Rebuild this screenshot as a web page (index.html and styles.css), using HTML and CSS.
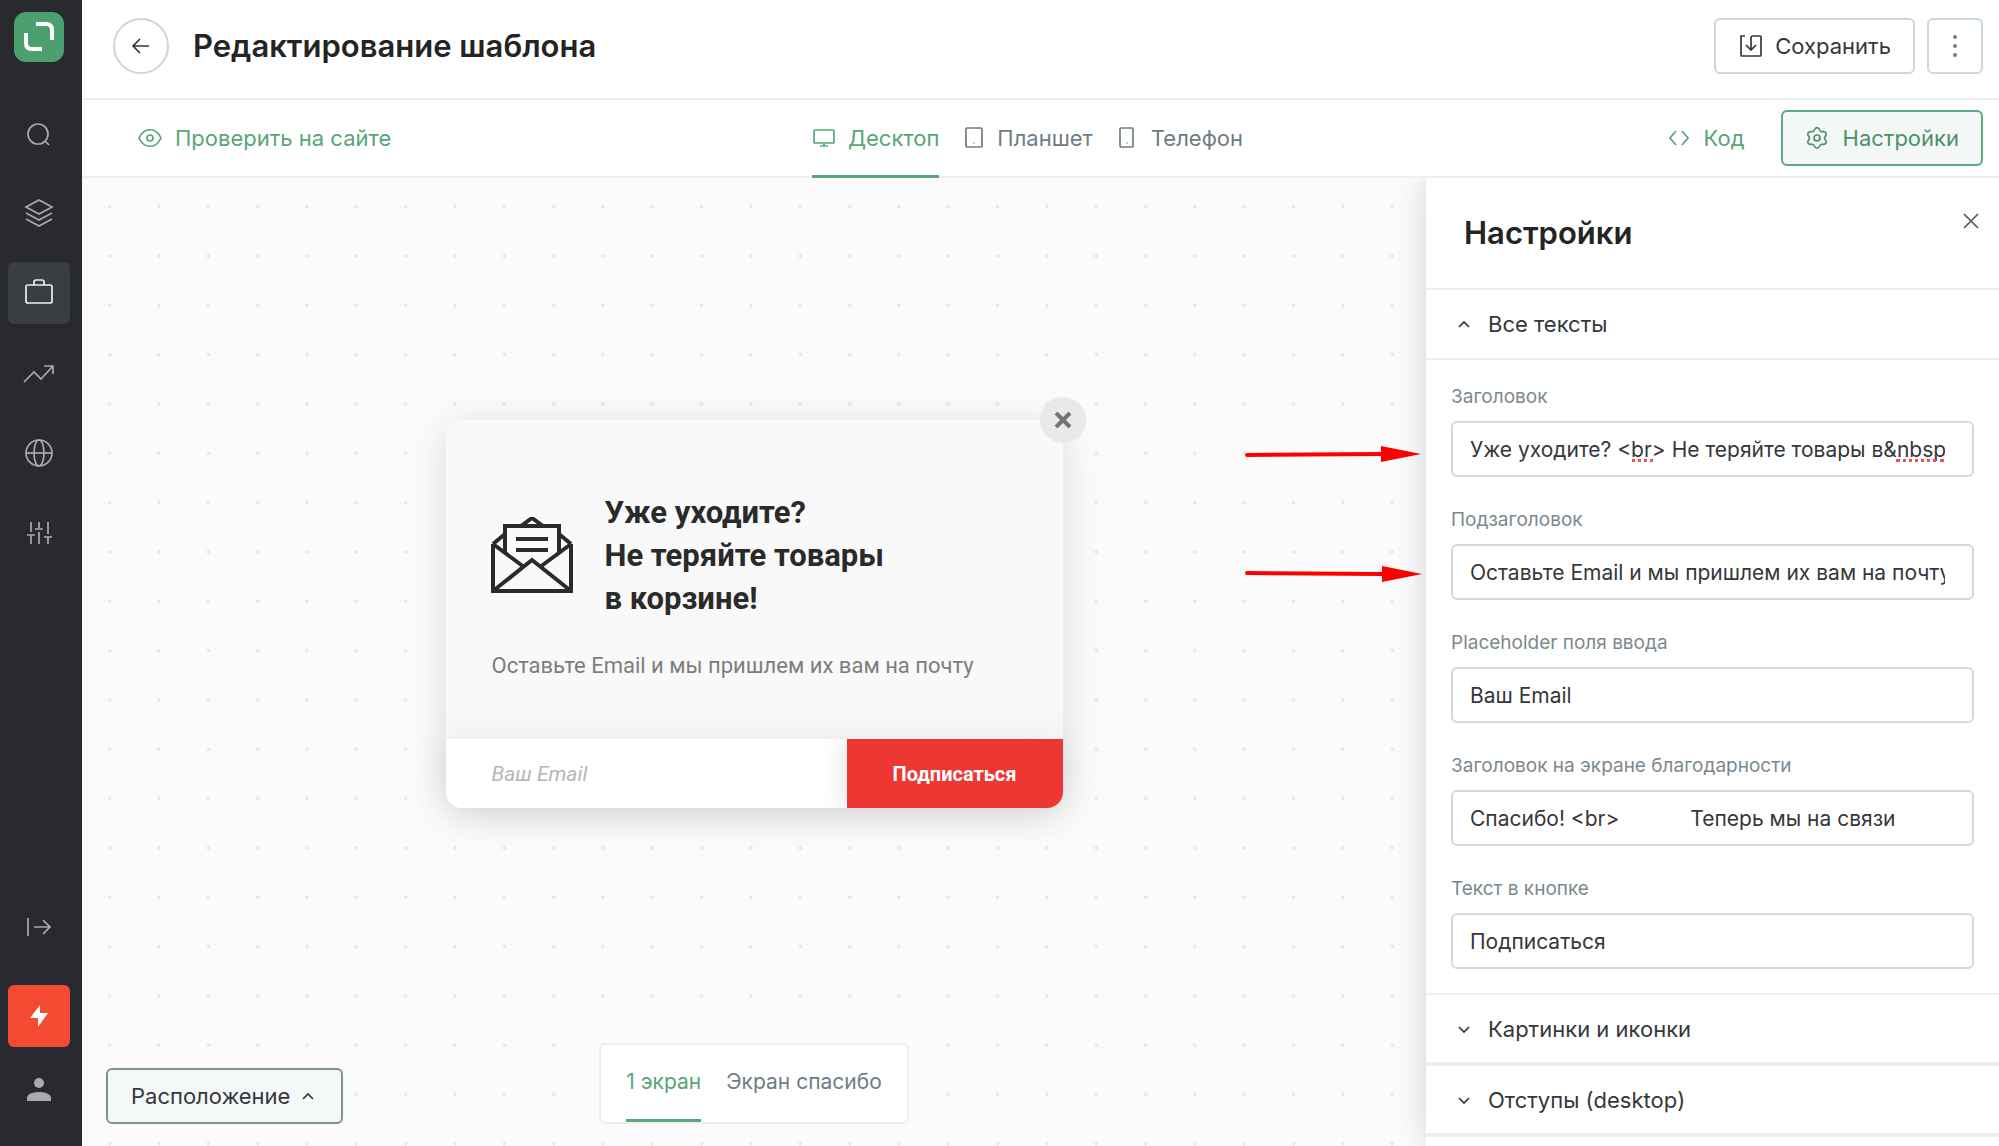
FILE: index.html
```html
<!DOCTYPE html>
<html lang="ru">
<head>
<meta charset="utf-8">
<title>Редактирование шаблона</title>
<meta name="viewport" content="width=device-width, initial-scale=1">
<link rel="stylesheet" href="styles.css">
</head>
<body>
<div class="app">
  <nav class="rail" aria-label="Главное меню">
    <a class="logo" href="#" aria-label="Главная">
      <svg width="50" height="50" viewBox="0 0 50 50"><path d="M22 12h10q6 0 6 6v10M12 21v10q0 6 6 6h10"/></svg>
    </a>
    <a class="rail-link" href="#" aria-label="Поиск"><svg width="32" height="32" viewBox="0 0 32 32"><circle cx="15" cy="17" r="10"/><path d="M22 24l4 4"/></svg></a>
    <a class="rail-link" href="#" aria-label="Слои"><svg width="32" height="32" viewBox="0 0 32 32"><path d="M16 3l13 7-13 7-13-7zM3 16l13 7 13-7M3 22l13 7 13-7"/></svg></a>
    <a class="rail-link is-active" href="#" aria-label="Проекты"><svg width="32" height="32" viewBox="0 0 32 32"><rect x="3" y="8" width="26" height="18" rx="2"/><path d="M11 8V5q0-2 2-2h6q2 0 2 2v3"/></svg></a>
    <a class="rail-link" href="#" aria-label="Статистика"><svg width="32" height="32" viewBox="0 0 32 32"><path d="M1 25l10-10 7 7L30 9M21 9h9v8"/></svg></a>
    <a class="rail-link" href="#" aria-label="Сайты"><svg width="32" height="32" viewBox="0 0 32 32"><circle cx="16" cy="16" r="13"/><ellipse cx="16" cy="16" rx="5" ry="13"/><path d="M3 16h26"/></svg></a>
    <a class="rail-link" href="#" aria-label="Параметры"><svg width="32" height="32" viewBox="0 0 32 32"><path d="M8 5v10M8 18v9M4 18h8M16 5v6M16 15v12M12 12h8M25 5v12M25 20v7M21 20h8"/></svg></a>
    <div class="rail-bottom">
      <a class="rail-link is-exit" href="#" aria-label="Развернуть меню"><svg width="32" height="32" viewBox="0 0 32 32"><path d="M5 7v18M11 16h16M20 9l7 7-7 7"/></svg></a>
      <a class="rail-link is-boost" href="#" aria-label="Тариф"><svg width="32" height="32" viewBox="0 0 32 32"><path d="M17 5L7 18h8l0 9L25 13h-8z"/></svg></a>
      <a class="rail-link is-user" href="#" aria-label="Профиль"><svg width="32" height="32" viewBox="0 0 32 32"><circle cx="16" cy="9" r="5"/><path d="M4 27v-3c0-4 6-6 12-6s12 2 12 6v3z"/></svg></a>
    </div>
  </nav>

  <div class="main">
    <header class="header">
      <button class="back" type="button" aria-label="Назад"><svg width="20" height="20" viewBox="0 0 20 20"><path d="M18 10H2M9 3l-7 7 7 7"/></svg></button>
      <h1 class="title">Редактирование шаблона</h1>
      <button class="btn btn-save" type="button"><svg width="22" height="24" viewBox="0 0 22 24"><path d="M5 2H1v19q0 1 1 1h18q1 0 1-1V3q0-1-1-1h-7q-2 0-2 2v12M6 11l5 5 5-5"/></svg>Сохранить</button>
      <button class="btn btn-more" type="button" aria-label="Ещё"><svg width="24" height="24" viewBox="0 0 24 24"><circle cx="12" cy="3" r="2"/><circle cx="12" cy="12" r="2"/><circle cx="12" cy="21" r="2"/></svg></button>
    </header>

    <div class="toolbar">
      <a class="tool" href="#"><svg width="24" height="24" viewBox="0 0 24 24"><path d="M1 12c5-11 17-11 22 0-5 11-17 11-22 0z"/><circle cx="12" cy="12" r="3"/></svg>Проверить на сайте</a>
      <div class="devices" role="tablist">
        <button class="device is-active" type="button" role="tab" aria-selected="true"><svg width="24" height="24" viewBox="0 0 24 24"><rect x="2" y="4" width="20" height="13" rx="1"/><path d="M12 17v3M8 20h8"/></svg>Десктоп</button>
        <button class="device is-tablet" type="button" role="tab" aria-selected="false"><svg width="18" height="24" viewBox="0 0 18 24"><rect x="1" y="2" width="16" height="19" rx="1"/><path class="dot" d="M8 17h2"/></svg>Планшет</button>
        <button class="device is-phone" type="button" role="tab" aria-selected="false"><svg width="16" height="24" viewBox="0 0 16 24"><rect x="1" y="2" width="13" height="19" rx="1"/><path class="dot" d="M7 17h2"/></svg>Телефон</button>
      </div>
      <div class="tools">
        <a class="tool is-code" href="#"><svg width="20" height="24" viewBox="0 0 20 24"><path d="M7 5l-6 7 6 7M13 5l6 7-6 7"/></svg>Код</a>
        <button class="btn btn-settings" type="button"><svg width="22" height="24" viewBox="1 0 22 24"><g id="tooth"><path d="M8.250 5.500C9.500 4.800 9.400 1.700 12 1.700C14.600 1.700 14.500 4.800 15.750 5.500"/></g><use href="#tooth" transform="rotate(60 12 12)"/><use href="#tooth" transform="rotate(120 12 12)"/><use href="#tooth" transform="rotate(180 12 12)"/><use href="#tooth" transform="rotate(240 12 12)"/><use href="#tooth" transform="rotate(300 12 12)"/><circle cx="12" cy="12" r="3"/></svg>Настройки</button>
      </div>
    </div>

    <div class="workspace">
      <main class="canvas">
        <div class="stage">
          <section class="popup">
            <button class="popup-close" type="button" aria-label="Закрыть"><svg width="18" height="18" viewBox="0 0 18 18"><path d="M2 2l14 14M16 2L2 16"/></svg></button>
            <div class="popup-body">
              <div class="popup-head">
                <svg class="envelope" width="82" height="78" viewBox="0 0 82 78"><path d="M2 27v47h78V27M2 27L14 17M80 27L68 17M2 27l31 23M80 27L49 50M2 74l39-31 39 31M14 35V9h54v26M30 9l11-8 11 8M25 22h32M25 33h32"/></svg>
                <h2 class="popup-title">Уже уходите?<br>Не теряйте товары<br>в&nbsp;корзине!</h2>
              </div>
              <p class="popup-text">Оставьте Email и мы пришлем их вам на почту</p>
            </div>
            <form class="popup-form">
              <input class="popup-input" type="email" placeholder="Ваш Email" aria-label="Ваш Email">
              <button class="popup-submit" type="button">Подписаться</button>
            </form>
          </section>
        </div>
        <div class="canvas-bar">
          <button class="btn btn-place" type="button">Расположение<svg width="16" height="16" viewBox="0 0 16 16"><path d="M3 11l5-5 5 5"/></svg></button>
          <div class="screens" role="tablist">
            <button class="screen is-active" type="button" role="tab" aria-selected="true">1 экран</button>
            <button class="screen" type="button" role="tab" aria-selected="false">Экран спасибо</button>
          </div>
        </div>
        <svg class="arrow arrow-first" width="178" height="20" viewBox="0 0 178 20"><path class="shaft" d="M3 11L138 10"/><path d="M137 2v16l40-8z"/></svg>
        <svg class="arrow arrow-second" width="178" height="20" viewBox="0 0 178 20"><path class="shaft" d="M3 9L138 10"/><path d="M138 2v16l40-8z"/></svg>
      </main>

      <aside class="panel">
        <div class="panel-head">
          <h2 class="panel-title">Настройки</h2>
          <button class="panel-close" type="button" aria-label="Закрыть настройки"><svg width="16" height="16" viewBox="0 0 16 16"><path d="M1 1l14 14M15 1L1 15"/></svg></button>
        </div>
        <button class="section" type="button" aria-expanded="true"><svg width="16" height="16" viewBox="0 0 16 16"><path d="M3 11l5-5 5 5"/></svg>Все тексты</button>
        <div class="fields">
          <div class="field">
            <label for="f-title">Заголовок</label>
            <div class="control">
              <input id="f-title" type="text" value="Уже уходите? &lt;br&gt; Не теряйте товары в&amp;nbsp;корзине!">
              <span class="typo typo-br"></span><span class="typo typo-nbsp"></span>
            </div>
          </div>
          <div class="field">
            <label for="f-sub">Подзаголовок</label>
            <input id="f-sub" type="text" value="Оставьте Email и мы пришлем их вам на почту">
          </div>
          <div class="field">
            <label for="f-ph">Placeholder поля ввода</label>
            <input id="f-ph" type="text" value="Ваш Email">
          </div>
          <div class="field">
            <label for="f-thanks">Заголовок на экране благодарности</label>
            <input id="f-thanks" type="text" value="Спасибо! &lt;br&gt;            Теперь мы на связи">
          </div>
          <div class="field">
            <label for="f-btn">Текст в кнопке</label>
            <input id="f-btn" type="text" value="Подписаться">
          </div>
        </div>
        <button class="section is-closed" type="button" aria-expanded="false"><svg width="16" height="16" viewBox="0 0 16 16"><path d="M3 6l5 5 5-5"/></svg>Картинки и иконки</button>
        <button class="section is-closed" type="button" aria-expanded="false"><svg width="16" height="16" viewBox="0 0 16 16"><path d="M3 6l5 5 5-5"/></svg>Отступы (desktop)</button>
      </aside>
    </div>
  </div>
</div>
</body>
</html>
```
FILE: styles.css
```css
* { box-sizing: border-box; }

body {
  margin: 0;
  background: #fff;
  color: #35373b;
  font: 400 22px/32px Inter, "Noto Sans", sans-serif;
}

button, input { margin: 0; font: inherit; color: inherit; }
button { padding: 0; border: 0; background: none; cursor: pointer; }
a { color: inherit; text-decoration: none; }
h1, h2, p { margin: 0; }
svg { display: block; flex: none; fill: none; stroke: currentColor; stroke-width: 1.7; }

.app { display: flex; height: 100vh; overflow: hidden; }

/* Left rail */
.rail {
  flex: none;
  display: flex;
  flex-direction: column;
  align-items: center;
  gap: 18px;
  width: 82px;
  padding: 12px 5px 25px 0;
  background: #292a2e;
  color: #a9aaad;
}
.logo { margin-bottom: 22px; border-radius: 12px; background: #4c9f6e; color: #fff; }
.logo svg { stroke-width: 4; }
.rail-link {
  display: flex;
  align-items: center;
  justify-content: center;
  width: 62px;
  height: 62px;
  border-radius: 6px;
}
.rail-link.is-active { background: #3a3d42; color: #eee; }
.rail-bottom { display: flex; flex-direction: column; margin-top: auto; }
.is-exit { margin-bottom: 27px; }
.is-boost { background: #f44a32; color: #fff; }
.is-boost svg, .is-user svg { fill: currentColor; stroke: none; }
.is-user { margin-top: 12px; }

/* Header */
.main { flex: 1; display: flex; flex-direction: column; min-width: 0; }
.header {
  display: flex;
  align-items: flex-start;
  height: 100px;
  padding: 18px 16px 0 31px;
  border-bottom: 2px solid #eeefef;
}
.back {
  display: flex;
  align-items: center;
  justify-content: center;
  width: 56px;
  height: 56px;
  border: 2px solid #cbd7df;
  border-radius: 50%;
}
.title {
  flex: 1;
  margin-left: 24px;
  color: #242424;
  font-size: 31px;
  font-weight: 600;
  line-height: 56px;
}
.btn {
  display: flex;
  align-items: center;
  height: 56px;
  border: 2px solid #cbd7df;
  border-radius: 6px;
  background: #fff;
}
.btn-save { gap: 13px; padding: 0 22px 0 24px; }
.btn-more { justify-content: center; width: 56px; margin-left: 12px; color: #6f7d86; }
.btn-more svg { fill: currentColor; stroke: none; }

/* Toolbar */
.toolbar {
  display: grid;
  grid-template-columns: 1fr auto 1fr;
  align-items: center;
  height: 78px;
  border-bottom: 2px solid #eeefef;
  color: #58a578;
}
.tool { display: flex; align-items: center; gap: 13px; padding-left: 56px; }
.devices { display: flex; gap: 26px; align-self: stretch; margin-bottom: -2px; padding-right: 26px; color: #6f7d83; }
.device { display: flex; align-items: center; gap: 14px; border-bottom: 3px solid transparent; }
.device.is-active { gap: 12px; border-color: #58a578; color: #58a578; }
.device.is-phone { gap: 16px; }
.dot { opacity: .5; }
.tools { display: flex; align-items: center; justify-content: flex-end; gap: 36px; padding-right: 16px; }
.is-code { gap: 15px; padding-left: 0; }
.btn-settings { gap: 15px; padding: 0 22px 0 23px; border-color: #5cab7d; background: #f3f7f6; color: #4c9068; }

/* Canvas */
.workspace { flex: 1; display: flex; min-height: 0; }
.canvas {
  position: relative;
  flex: 1;
  display: flex;
  flex-direction: column;
  min-width: 0;
  background: #fbfbfb radial-gradient(circle, #e6eaeb 0 2px, transparent 2px) 3px 4px / calc(148px / 3) calc(148px / 3);
}
.stage { flex: 1; display: flex; align-items: center; justify-content: center; padding-top: 7px; }
.popup {
  position: relative;
  width: 617px;
  border-radius: 16px;
  background: #f9f9f9;
  box-shadow: 0 6px 40px rgba(0, 0, 0, .13);
  font-family: Roboto, sans-serif;
}
.popup-body { padding: 71px 46px 57px; }
.popup-head { display: flex; align-items: center; gap: 32px; }
.envelope { margin-left: -1px; stroke: #2a2a2a; stroke-width: 4; }
.popup-title { color: #2a2a2a; font-size: 31px; font-weight: 700; line-height: 43px; }
.popup-text { margin-top: 30px; color: #7d7d7d; }
.popup-form {
  display: flex;
  height: 69px;
  overflow: hidden;
  border-radius: 0 0 16px 16px;
  box-shadow: 0 0 40px rgba(0, 0, 0, .08);
}
.popup-input { flex: 1; min-width: 0; padding: 0 46px; border: 0; background: #fff; font-size: 21px; font-style: italic; }
.popup-input::placeholder { color: #b5b5b5; }
.popup-submit { width: 216px; background: #ee3733; box-shadow: 0 0 30px rgba(0, 0, 0, .14); color: #fff; font-size: 20px; font-weight: 700; }
.popup-close {
  position: absolute;
  top: -23px;
  right: -23px;
  display: flex;
  align-items: center;
  justify-content: center;
  width: 46px;
  height: 46px;
  border-radius: 50%;
  background: #e9e9e9;
  color: #737373;
}
.popup-close svg { stroke-width: 4; }

.canvas-bar {
  display: grid;
  grid-template-columns: 1fr auto 1fr;
  align-items: end;
  padding: 0 24px 22px;
}
.btn-place { justify-self: start; gap: 10px; padding: 0 25px 0 23px; border-color: #7f8e96; background: #f4f8f9; }
.screens {
  display: flex;
  gap: 25px;
  height: 81px;
  padding: 0 25px;
  border: 2px solid #efefef;
  border-radius: 6px;
  background: #fff;
  color: #6f7d83;
  font-size: 21px;
}
.screen { border-bottom: 3px solid transparent; }
.screen.is-active { border-color: #58a578; color: #58a578; }

/* Pointers drawn over the canvas */
.arrow { position: absolute; right: 4px; fill: #f00; stroke: none; }
.arrow .shaft { stroke: #f00; stroke-width: 4; stroke-linecap: round; }
.arrow-first { top: 266px; }
.arrow-second { top: 386px; }

/* Settings panel */
.panel {
  position: relative;
  flex: none;
  width: 573px;
  overflow: hidden;
  background: #fff;
  clip-path: inset(0 0 0 -40px);
  box-shadow: 0 0 30px rgba(0, 0, 0, .16);
}
.panel-head {
  display: flex;
  align-items: flex-start;
  justify-content: space-between;
  height: 112px;
  padding: 33px 20px 0 38px;
  border-bottom: 2px solid #eeefef;
}
.panel-title { color: #242424; font-size: 31px; font-weight: 600; line-height: 44px; }
.panel-close { display: flex; margin-top: 2px; color: #55585c; }
.section {
  display: flex;
  align-items: center;
  gap: 16px;
  width: 100%;
  height: 70px;
  padding-left: 30px;
  border-bottom: 2px solid #eeefef;
}
.section.is-closed { height: 71px; border-bottom-width: 4px; }
.fields {
  display: grid;
  gap: 31px;
  padding: 25px 25px 24px;
  border-bottom: 2px solid #eeefef;
}
.field { display: grid; gap: 12px; }
.field label { color: #7b898f; font-size: 19px; line-height: 24px; }
.control { position: relative; display: grid; }
.field input {
  width: 100%;
  height: 56px;
  padding: 0 27px 0 17px;
  border: 2px solid #cfdae1;
  border-radius: 6px;
  background: #fff;
  font-size: 21px;
}
.typo { position: absolute; top: 38px; height: 3px; border-bottom: 3px dotted #f0505a; }
.typo-br { left: 181px; width: 21px; }
.typo-nbsp { right: 30px; width: 48px; }
```
